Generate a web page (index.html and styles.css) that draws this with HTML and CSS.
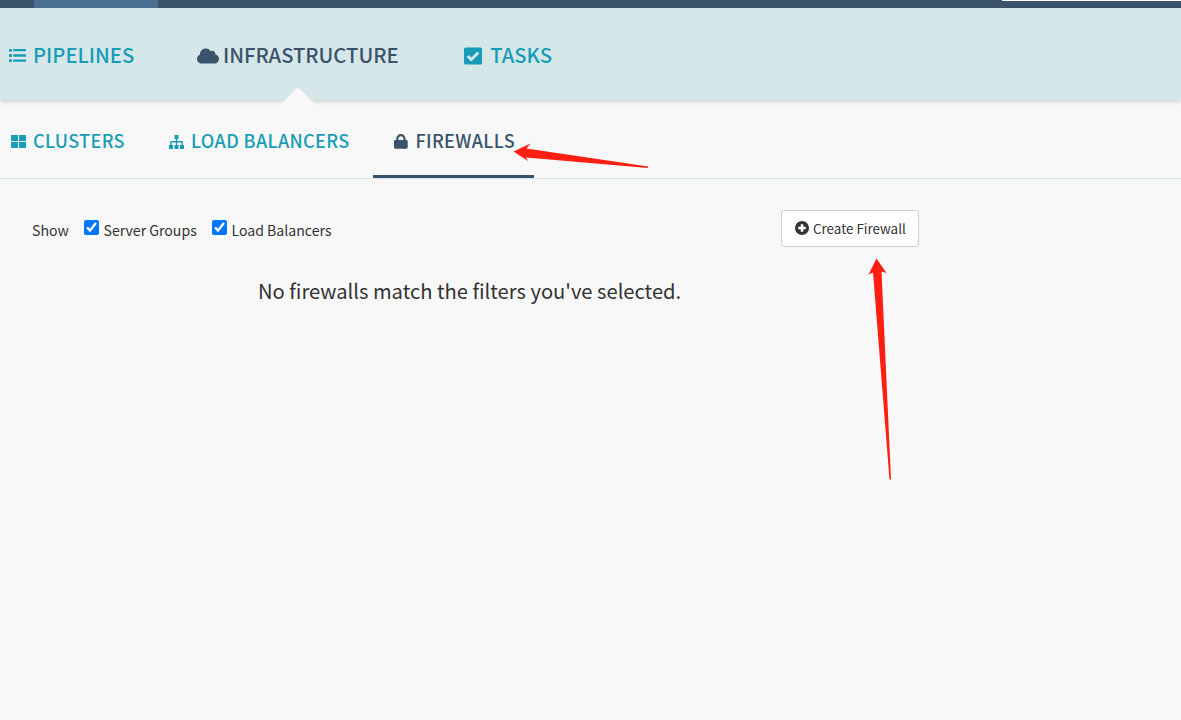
FILE: index.html
```html
<!DOCTYPE html>
<html lang="en">
<head>
<meta charset="utf-8">
<title>Firewalls</title>
<link rel="stylesheet" href="styles.css">
</head>
<body>
<div class="topbar"><div class="topbar-active"></div><div class="topbar-search"></div></div>
<nav class="primary">
  <a class="item pipelines"><svg width="17" height="15" viewBox="0 0 18 16"><path d="M0 1h3v3H0zM4.500 1H18v2.500H4.500zM0 6.500h3v3H0zM4.500 6.700H18v2.500H4.500zM0 12h3v3H0zM4.500 12.200H18v2.500H4.500z"/></svg><span>PIPELINES</span></a>
  <a class="item infrastructure current"><svg width="22" height="16" viewBox="0 0 22 16"><path d="M5 15.500C2 15.500 0 13.500 0 10.900C0 8.700 1.300 7.100 3 6.400C3 2.800 5.500.5 8.700.5C11 .5 12.700 1.600 13.700 3.200C15.700 2 18.700 3.200 18.500 6.500C20.600 7 22 8.700 22 11C22 13.700 20 15.500 17.500 15.500Z"/></svg><span>INFRASTRUCTURE</span></a>
  <a class="item tasks"><svg width="18" height="18" viewBox="0 0 18 18"><rect y=".5" width="18" height="17" rx="1.500"/><path class="tick" d="M3.700 9l3.600 3.600 7-7.200"/></svg><span>TASKS</span></a>
  <svg class="pointer" width="36" height="18" viewBox="0 0 36 18"><path d="M0 18L18 0l18 18z"/></svg>
</nav>
<nav class="secondary">
  <a class="tab clusters"><svg width="15" height="13" viewBox="0 0 15 13"><path d="M0 0h7v6H0zM8 0h7v6H8zM0 7h7v6H0zM8 7h7v6H8z"/></svg><span>CLUSTERS</span></a>
  <a class="tab balancers"><svg width="15" height="14" viewBox="0 0 15 14"><path d="M5.500 0h4v4H8.200v2H13q.8 0 .8.800V10H15v4h-4v-4h1.400V7.400H8.200V10h1.300v4h-4v-4h1.300V7.400H2.600V10H4v4H0v-4h1.200V6.800Q1.200 6 2 6h4.800V4H5.500z"/></svg><span>LOAD BALANCERS</span></a>
  <a class="tab firewalls current"><svg width="14" height="15" viewBox="0 0 14 15"><path fill-rule="evenodd" d="M2.200 6V4.800a4.700 4.700 0 0 1 9.400 0V6h.8q1.300 0 1.300 1.300v6q0 1.400-1.300 1.400H1.300Q0 14.700 0 13.300v-6Q0 6 1.300 6zm2.200 0h5V4.800a2.500 2.500 0 0 0-5 0z"/></svg><span>FIREWALLS</span></a>
</nav>
<main>
  <div class="controls">
    <div class="filters">
      <span class="show">Show</span>
      <label class="groups"><input type="checkbox" checked><span>Server Groups</span></label>
      <label class="lbs"><input type="checkbox" checked><span>Load Balancers</span></label>
    </div>
    <button class="create"><svg width="14" height="14" viewBox="0 0 14 14"><circle cx="7" cy="7" r="7"/><path class="plus" d="M7 3.200v7.600M3.200 7h7.600"/></svg><span>Create Firewall</span></button>
  </div>
  <h4 class="empty">No firewalls match the filters you've selected.</h4>
</main>
<svg class="arrows" width="1181" height="720" viewBox="0 0 1181 720"><path d="M513.500 151.500L530.500 143.500 526.500 148.500 648 166.500V168L526 157.500 528 161z"/><path d="M876.500 258.500L886.500 273 881.500 271.500 891 479.500H889.500L873 272.500 868.500 274.500z"/></svg>
</body>
</html>
```
FILE: styles.css
```css
* { box-sizing: border-box; }
body { margin: 0; height: 720px; overflow: hidden; background: #f8f8f8; color: #333; font-family: "Noto Sans CJK SC", "Open Sans", sans-serif; }
svg { display: block; flex: none; fill: currentColor; }
.topbar { display: flex; height: 8px; background: #3a536a; }
.topbar-active { width: 124px; margin-left: 34px; background: #4b7192; }
.topbar-search { width: 179px; height: 1px; margin-left: auto; background: #fff; }
.primary { position: relative; display: flex; height: 92px; padding-left: 9px; background: #d6e7ea; box-shadow: 0 2px 4px rgba(0, 0, 0, .15); }
.item { display: flex; align-items: center; height: 95px; color: #179db7; font-size: 20.200px; font-weight: 500; line-height: 30px; white-space: nowrap; }
.item span { margin: 0 0 2px 7px; }
.pipelines { width: 188px; }
.infrastructure { width: 267px; }
.infrastructure span { margin-left: 4px; }
.tasks span { margin-left: 8.300px; }
.current { color: #3a536a; }
.tick, .plus { fill: none; stroke: #d6e7ea; stroke-width: 2.800; }
.pointer { position: absolute; left: 280px; top: 79px; color: #f8f8f8; }
.secondary { display: flex; height: 79px; border-bottom: 1px solid #d5e5ee; }
.tab { display: flex; align-items: center; height: 78px; padding: 5px 0 0; color: #179db7; font-size: 18px; font-weight: 500; line-height: 28px; letter-spacing: .38px; white-space: nowrap; }
.tab span { margin: 0 0 4px 7px; }
.clusters { margin-left: 11px; width: 158px; }
.balancers { width: 204px; }
.firewalls { width: 161px; padding: 8px 0 0 21px; border-bottom: 3px solid #3a536a; }
.firewalls span { margin-left: 7.400px; }
.secondary .current { color: #3a536a; }
main { width: 938px; padding: 31px 19px 0 32px; }
.controls { display: flex; justify-content: space-between; }
.filters { display: flex; align-items: center; height: 37px; padding-top: 3px; font-size: 14.100px; line-height: 22px; }
.filters label { display: flex; align-items: center; }
.filters input { width: 15px; height: 15px; margin: 0 4.500px 5px 0; accent-color: #0075ff; }
.show { width: 52px; }
.groups { width: 128px; }
.create { display: flex; align-items: center; width: 138px; height: 37px; padding: 0 0 0 13px; border: 1px solid #ccc; border-radius: 3px; background: #fff; color: #333; font: 13.400px/20px "Noto Sans CJK SC", "Open Sans", sans-serif; white-space: nowrap; }
.create svg { margin-bottom: 2px; }
.create span { margin: 0 0 2px 4px; }
.plus { stroke: #fff; stroke-width: 2.500; }
.empty { margin: 29px 0 0; padding-left: 226px; font-size: 20.160px; font-weight: 400; line-height: 30px; white-space: nowrap; }
.arrows { position: absolute; left: 0; top: 0; color: #ff1e12; pointer-events: none; }
```
